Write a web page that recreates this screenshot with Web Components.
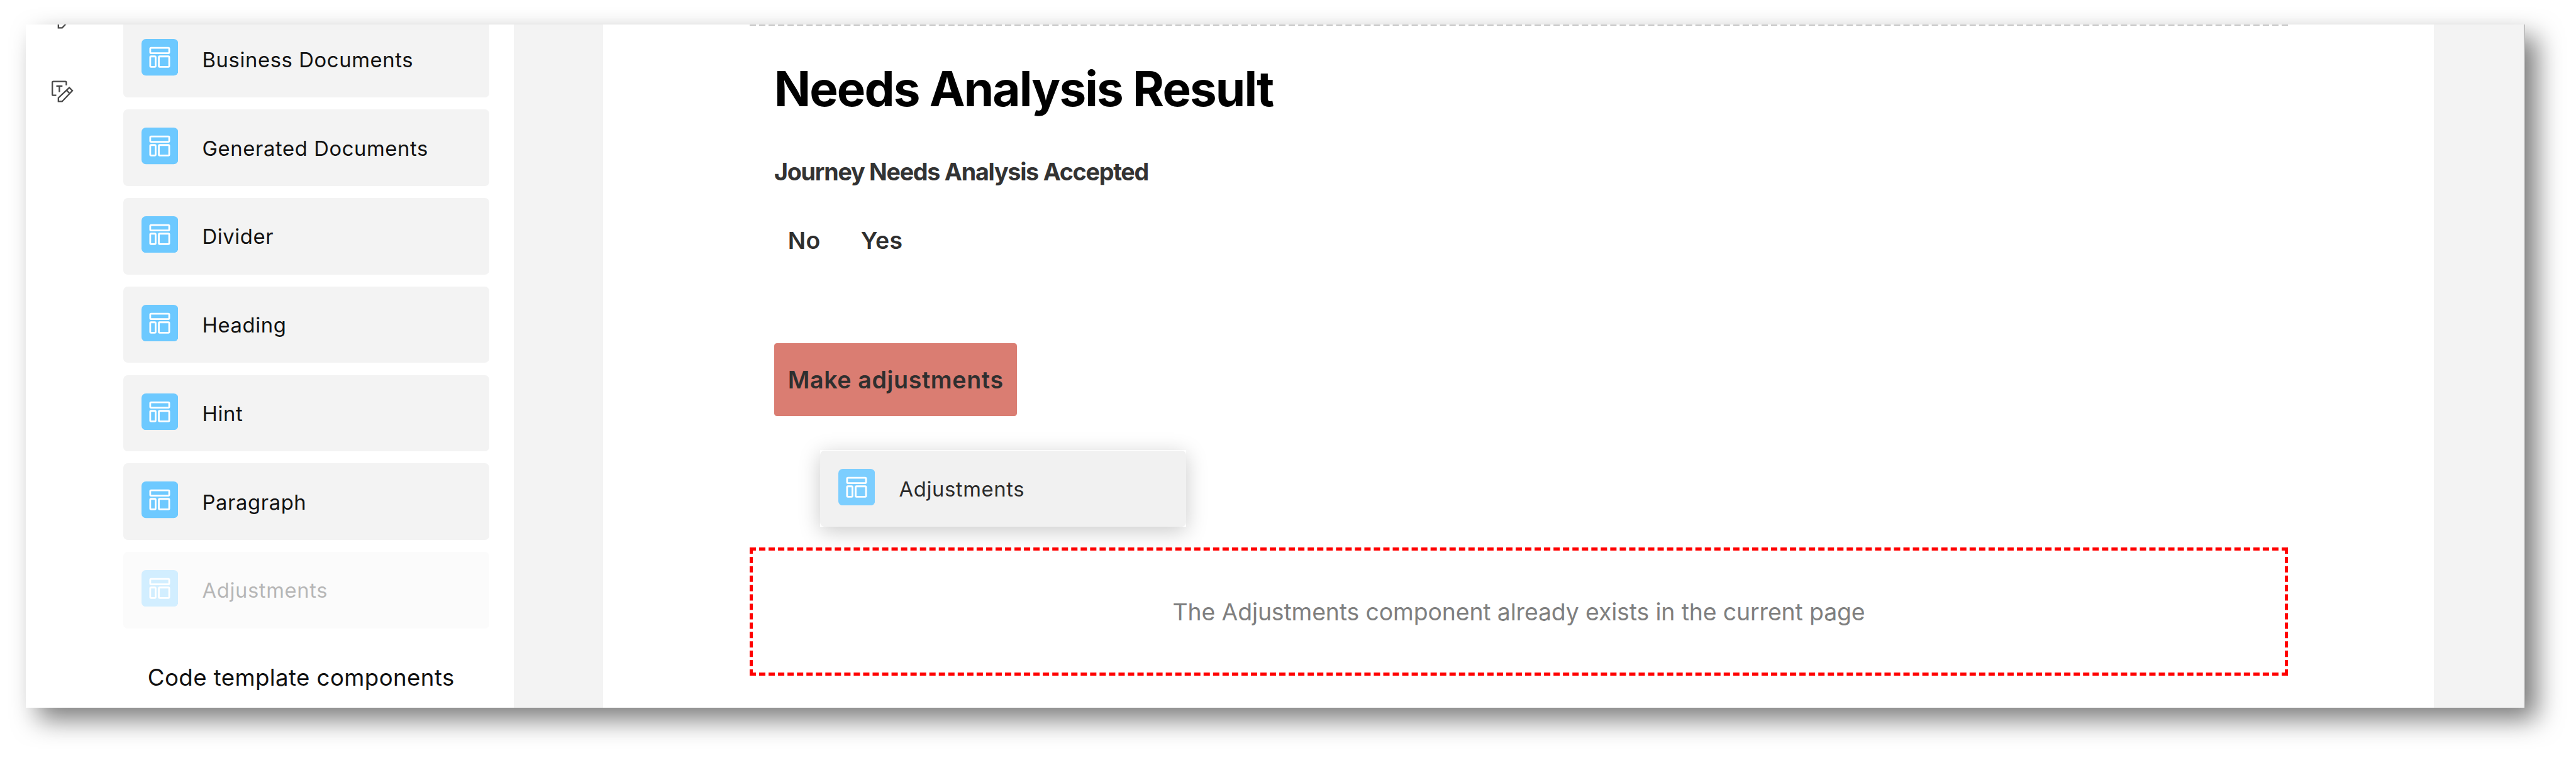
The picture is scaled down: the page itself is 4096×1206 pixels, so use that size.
<!DOCTYPE html>
<html lang="en">
<head>
<meta charset="utf-8">
<title>Page editor</title>
<style>
  html, body { margin: 0; height: 100%; background: #fff; }
  body { font-family: Inter, "Liberation Sans", sans-serif; color: #111; overflow: hidden; }
</style>
</head>
<body>
<editor-window>
  <tool-rail slot="rail"></tool-rail>
  <component-palette slot="palette">
    <palette-card>Business Documents</palette-card>
    <palette-card>Generated Documents</palette-card>
    <palette-card>Divider</palette-card>
    <palette-card>Heading</palette-card>
    <palette-card>Hint</palette-card>
    <palette-card>Paragraph</palette-card>
    <palette-card disabled>Adjustments</palette-card>
    <span slot="footer">Code template components</span>
  </component-palette>
  <page-canvas>
    <span slot="title">Needs Analysis Result</span>
    <span slot="question">Journey Needs Analysis Accepted</span>
    <choice-option slot="options">No</choice-option>
    <choice-option slot="options">Yes</choice-option>
    <action-button slot="action">Make adjustments</action-button>
    <drop-zone slot="drop">The Adjustments component already exists in the current page</drop-zone>
  </page-canvas>
</editor-window>
<drag-preview><palette-card dragged>Adjustments</palette-card></drag-preview>

<script>
function define(name, markup) {
  const template = document.createElement('template');
  template.innerHTML = markup;
  customElements.define(name, class extends HTMLElement {
    constructor() {
      super();
      this.attachShadow({ mode: 'open' }).appendChild(template.content.cloneNode(true));
    }
  });
}

define('editor-window', `
<style>
  :host { display: flex; box-sizing: border-box; width: 4096px; height: 1206px; padding: 39px 81px 80px 41px; }
  .frame { display: flex; flex: 1; box-sizing: border-box; overflow: hidden; background: #fff;
    border-right: 2px solid #c0c0c0; box-shadow: 18.5px 18.5px 39px rgba(0,0,0,.53); }
  .work { flex: 1; display: flex; background: #f3f3f3; padding: 0 143px 0 142px; }
</style>
<div class="frame">
  <slot name="rail"></slot>
  <slot name="palette"></slot>
  <div class="work"><slot></slot></div>
</div>`);

define('edit-text-icon', `
<style>
  :host { display: block; width: 36.1px; height: 36.1px; }
  svg { display: block; width: 100%; height: 100%; fill: none; stroke: #484848; stroke-width: 12.5; }
</style>
<svg viewBox="255 535 195 195">
  <path d="M301 668H275Q267 668 267 660V557Q267 549 275 549H379Q387 549 387 557V582"/>
  <path d="M301 588H354M327.500 588V641"/>
  <path d="M319 721V690L413 602L439 628L351 721ZM389 625L415 651"/>
</svg>`);

define('tool-rail', `
<style>
  :host { display: flex; flex-direction: column; gap: 80.5px; box-sizing: border-box; width: 155px; padding-left: 39.5px; }
  edit-text-icon:first-of-type { margin-top: -28.7px; }
</style>
<edit-text-icon></edit-text-icon>
<edit-text-icon></edit-text-icon>`);

define('layout-icon', `
<style>
  :host { display: block; width: 58.3px; height: 58.3px; }
  svg { display: block; width: 100%; height: 100%; }
</style>
<svg viewBox="0 0 315 315">
  <rect width="315" height="315" rx="38" fill="var(--tile, #6dc9ff)"/>
  <g fill="none" stroke="#fff" stroke-width="15">
    <rect x="75" y="76" width="163" height="46" rx="7"/>
    <rect x="75" y="150" width="46" height="90" rx="7"/>
    <rect x="149" y="150" width="89" height="90" rx="7"/>
  </g>
</svg>`);

define('palette-card', `
<style>
  :host { display: flex; align-items: flex-start; gap: 38.2px; box-sizing: border-box; width: 582px; height: 121.5px;
    padding-left: 29px; background: #f3f3f3; border-radius: 7px; }
  :host([disabled]) { opacity: .3; }
  :host([dragged]) { background: #f1f1f1; color: #2b2b2b; --tile: #7cceff; }
  layout-icon { margin-top: 29px; }
  .label { font-size: 32.8px; letter-spacing: .6px; line-height: 121.5px; padding-top: 1.3px; white-space: nowrap; }
</style>
<layout-icon></layout-icon>
<div class="label"><slot></slot></div>`);

define('component-palette', `
<style>
  :host { display: block; width: 621px; }
  .list { display: flex; flex-direction: column; gap: 19.3px; margin-top: -5.6px; }
  .footer { margin-top: 48.2px; padding-left: 38.8px; font-size: 36.7px; letter-spacing: .38px; line-height: 60px; white-space: nowrap; }
</style>
<div class="list"><slot></slot></div>
<div class="footer"><slot name="footer"></slot></div>`);

define('page-canvas', `
<style>
  :host { display: block; flex: 1; box-sizing: border-box; background: #fff; padding: 0 232px 0 233px; }
  .section { height: 10px; margin-top: -8px; box-sizing: border-box; border-bottom: 5px dashed #c8c8c8; }
  .body { padding: 54.9px 39px 0; }
  h1 { margin: 0; font-size: 76.3px; font-weight: 650; letter-spacing: -1.88px; line-height: 90px; color: #000; white-space: nowrap; }
  h2 { margin: 62.3px 0 0; font-size: 37.7px; font-weight: 650; letter-spacing: -1.26px; line-height: 50px; color: #333; }
  .options { display: flex; margin: 58.5px 0 139.2px; }
  .drop { margin-top: 208.7px; }
</style>
<div class="section"></div>
<div class="body">
  <h1><slot name="title"></slot></h1>
  <h2><slot name="question"></slot></h2>
  <div class="options"><slot name="options"></slot></div>
  <slot name="action"></slot>
</div>
<div class="drop"><slot name="drop"></slot></div>`);

define('choice-option', `
<style>
  :host { display: block; box-sizing: border-box; min-width: 116px; padding-left: 21.7px;
    font-size: 37.4px; font-weight: 580; letter-spacing: .3px; line-height: 51px; margin-bottom: -1px; color: #2f2f2f; }
</style>
<slot></slot>`);

define('action-button', `
<style>
  :host { display: block; box-sizing: border-box; width: 386px; height: 116.6px; padding: 1.5px 0 0 21.7px;
    background: #da7d72; border-radius: 4.5px; font-size: 37.6px; font-weight: 580; letter-spacing: .63px;
    line-height: 116.6px; color: #2f2f2f; white-space: nowrap; }
</style>
<slot></slot>`);

define('drop-zone', `
<style>
  :host { display: flex; justify-content: center; box-sizing: border-box; height: 204px; border: 5px dashed #f00;
    padding-top: .9px; font-size: 37.4px; letter-spacing: -.13px; line-height: 194px; color: #7f7f7f; white-space: nowrap; }
</style>
<div><slot></slot></div>`);

define('drag-preview', `
<style>
  :host { display: block; position: absolute; left: 1304px; top: 715.7px; padding-top: 1px; background: #fff;
    box-shadow: 0 7px 32px rgba(0,0,0,.21); }
</style>
<slot></slot>`);
</script>
</body>
</html>
